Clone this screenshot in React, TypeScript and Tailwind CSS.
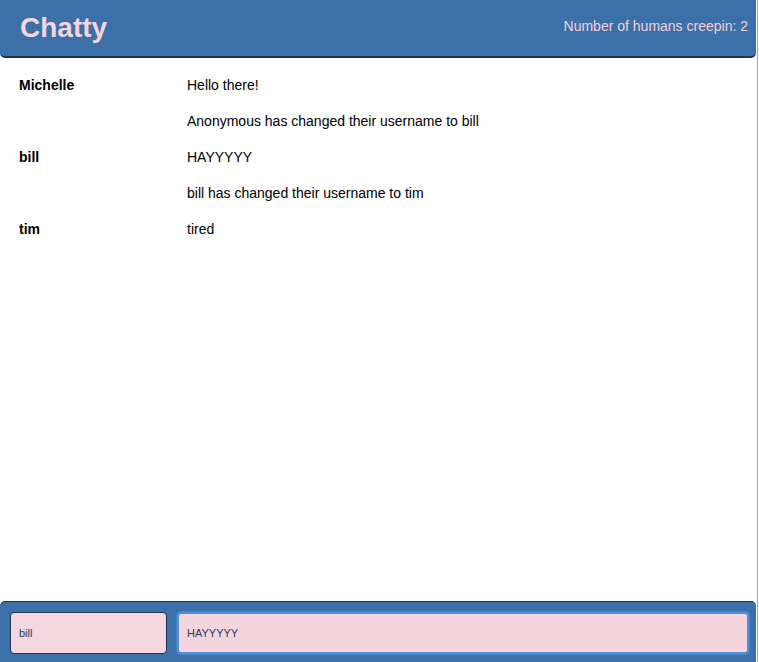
const messages = [
  { user: "Michelle", text: "Hello there!" },
  { user: "", text: "Anonymous has changed their username to bill" },
  { user: "bill", text: "HAYYYYY" },
  { user: "", text: "bill has changed their username to tim" },
  { user: "tim", text: "tired" },
];

export default function App() {
  return (
    <div className="w-[758px] h-[662px] border-r border-[#a9a9a9] bg-white font-['Liberation_Sans',Arial,sans-serif] flex flex-col">
      {/* header */}
      <nav className="w-[756px] h-[58px] shrink-0 bg-[#3b70a9] rounded-b-[5px] border-b-2 border-[#1d3457] flex items-center justify-between pl-5 pr-[8px]">
        <span className="text-[28px] font-bold text-[#f7d4dd] leading-none -mt-[1px]">Chatty</span>
        <span className="text-[14px] text-[#f4cfd9] -mt-[4px]">Number of humans creepin: 2</span>
      </nav>

      {/* messages */}
      <main className="flex-1 pt-[17px] pl-[19px] text-[14px] text-black">
        {messages.map((m, i) => (
          <div key={i} className="flex h-[36px]">
            <span className="w-[168px] font-bold">{m.user}</span>
            <span>{m.text}</span>
          </div>
        ))}
      </main>

      {/* composer */}
      <footer className="w-[756px] h-[61px] shrink-0 bg-[#3b70a9] rounded-t-[5px] border-t border-[#1d3457] flex items-start gap-[10px] pl-[10px] pt-[10px]">
        <input
          defaultValue="bill"
          className="w-[157px] h-[42px] rounded-[4px] border border-[#1f3352] bg-[#f5d7df] px-[8px] text-[11px] text-[#2b3a5c] outline-none"
        />
        <input
          defaultValue="HAYYYYY"
          className="w-[572px] h-[42px] rounded-[4px] border-2 border-[#4b92e4] bg-[#f4d5de] px-[8px] text-[11px] text-[#2b3a5c] outline-none shadow-[0_0_2px_#6aa8f0]"
        />
      </footer>
    </div>
  );
}
